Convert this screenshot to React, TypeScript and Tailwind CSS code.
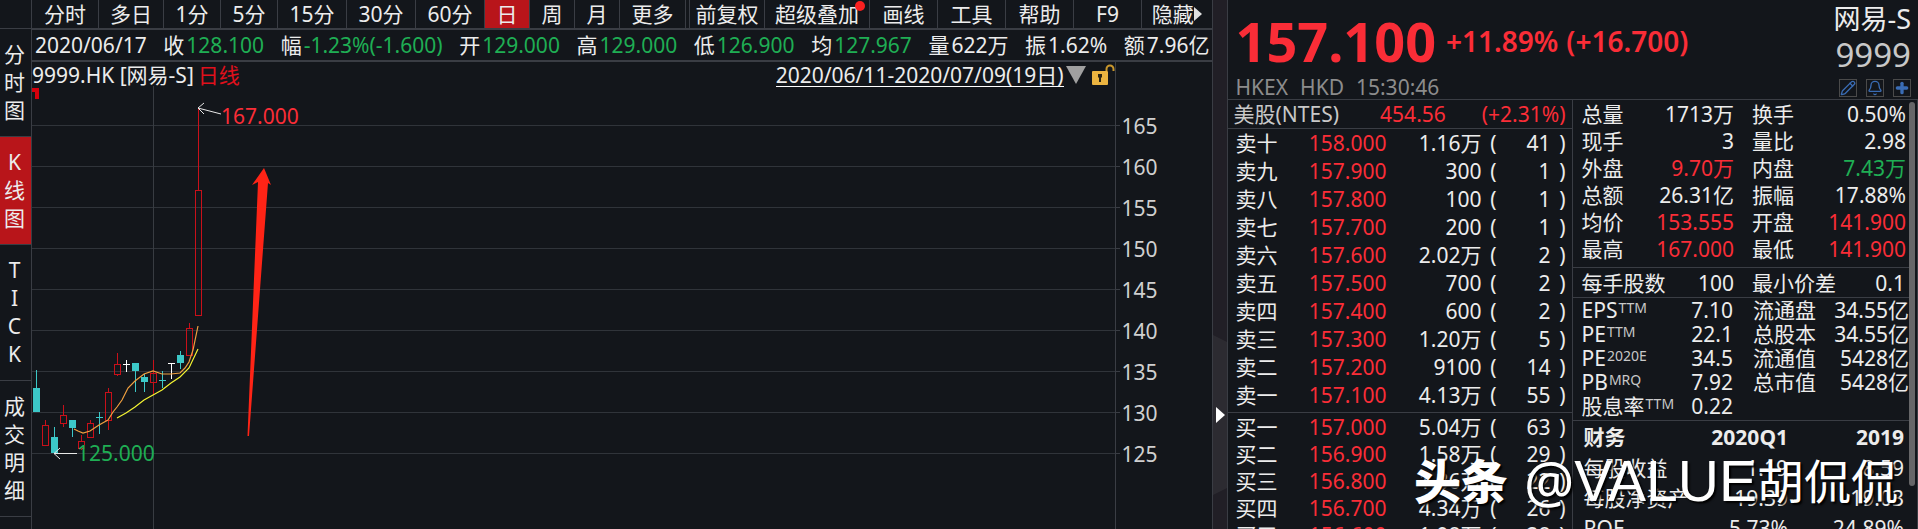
import React from "react";
import { Bell, Pencil, Plus } from "lucide-react";

const PERIODS = [
  { label: "分时", width: "w-[67px]" },
  { label: "多日", width: "w-[65px]" },
  { label: "1分", width: "w-[57px]" },
  { label: "5分", width: "w-[57px]" },
  { label: "15分", width: "w-[69px]" },
  { label: "30分", width: "w-[69px]" },
  { label: "60分", width: "w-[69px]" },
  { label: "日", width: "w-[45px]", active: true },
  { label: "周", width: "w-[45px]" },
  { label: "月", width: "w-[45px]" },
  { label: "更多", width: "w-[66px]" },
];

const TOOLS = [
  { label: "前复权", width: "w-[75px]" },
  { label: "超级叠加", width: "w-[105px]", dot: true },
  { label: "画线", width: "w-[68px]" },
  { label: "工具", width: "w-[68px]" },
  { label: "帮助", width: "w-[68px]" },
  { label: "F9", width: "w-[68px]" },
];

const SIDE_TABS = [
  { label: "分时图" },
  { label: "K线图", active: true },
  { label: "TICK" },
  { label: "成交明细" },
];

const DAY_INFO = [
  { label: "收", value: "128.100", green: true },
  { label: "幅", value: "-1.23%(-1.600)", green: true },
  { label: "开", value: "129.000", green: true },
  { label: "高", value: "129.000", green: true },
  { label: "低", value: "126.900", green: true },
  { label: "均", value: "127.967", green: true },
  { label: "量", value: "622万" },
  { label: "振", value: "1.62%" },
  { label: "额", value: "7.96亿" },
];

const PRICE_TICKS = [165, 160, 155, 150, 145, 140, 135, 130, 125];

type Candle = {
  high: number;
  low: number;
  top: number;
  bottom: number;
  kind: "up" | "down" | "flat";
};

const CANDLES: Candle[] = [
  { high: 135.1, low: 130, top: 132.9, bottom: 130, kind: "down" },
  { high: 129, low: 126, top: 128.4, bottom: 126, kind: "up" },
  { high: 128.2, low: 125, top: 127, bottom: 125, kind: "down" },
  { high: 130.8, low: 128.2, top: 129.6, bottom: 128.6, kind: "up" },
  { high: 129, low: 126.9, top: 129, bottom: 128.1, kind: "down" },
  { high: 127.2, low: 125.4, top: 126.5, bottom: 125.6, kind: "up" },
  { high: 129, low: 127, top: 128.7, bottom: 127, kind: "up" },
  { high: 130, low: 127.3, top: 129.4, bottom: 129.4, kind: "down" },
  { high: 132.9, low: 127.8, top: 132.5, bottom: 129, kind: "up" },
  { high: 137.2, low: 134.4, top: 135.9, bottom: 134.6, kind: "up" },
  { high: 136.4, low: 134.9, top: 135.9, bottom: 135.9, kind: "flat" },
  { high: 136, low: 132.4, top: 136, bottom: 135, kind: "down" },
  { high: 134.6, low: 132.4, top: 134.3, bottom: 133.6, kind: "down" },
  { high: 136.4, low: 132.1, top: 134.8, bottom: 133.6, kind: "up" },
  { high: 135, low: 132.9, top: 133.9, bottom: 133.9, kind: "down" },
  { high: 136, low: 134, top: 136, bottom: 136, kind: "flat" },
  { high: 137.4, low: 135.3, top: 137, bottom: 136, kind: "down" },
  { high: 140.9, low: 137, top: 140.3, bottom: 137, kind: "up" },
  { high: 167, low: 141.8, top: 157.1, bottom: 141.8, kind: "up" },
];

const ASKS = [
  ["卖十", "158.000", "1.16万", "41"],
  ["卖九", "157.900", "300", "1"],
  ["卖八", "157.800", "100", "1"],
  ["卖七", "157.700", "200", "1"],
  ["卖六", "157.600", "2.02万", "2"],
  ["卖五", "157.500", "700", "2"],
  ["卖四", "157.400", "600", "2"],
  ["卖三", "157.300", "1.20万", "5"],
  ["卖二", "157.200", "9100", "14"],
  ["卖一", "157.100", "4.13万", "55"],
];

const BIDS = [
  ["买一", "157.000", "5.04万", "63"],
  ["买二", "156.900", "1.58万", "29"],
  ["买三", "156.800", "1.36万", "22"],
  ["买四", "156.700", "4.34万", "26"],
  ["买五", "156.600", "1.98万", "28"],
];

const STATS = [
  ["总量", "1713万", "", "换手", "0.50%", ""],
  ["现手", "3", "", "量比", "2.98", ""],
  ["外盘", "9.70万", "text-[#fa2d37]", "内盘", "7.43万", "text-[#1fae54]"],
  ["总额", "26.31亿", "", "振幅", "17.88%", ""],
  ["均价", "153.555", "text-[#fa2d37]", "开盘", "141.900", "text-[#fa2d37]"],
  ["最高", "167.000", "text-[#fa2d37]", "最低", "141.900", "text-[#fa2d37]"],
];

const RATIOS = [
  ["EPS", "TTM", "7.10", "流通盘", "34.55亿"],
  ["PE", "TTM", "22.1", "总股本", "34.55亿"],
  ["PE", "2020E", "34.5", "流通值", "5428亿"],
  ["PB", "MRQ", "7.92", "总市值", "5428亿"],
  ["股息率", "TTM", "0.22", "", ""],
];

const FINANCE = [
  ["每股收益", "1.19", "8.59"],
  ["每股净资产", "19.39", "19.03"],
  ["ROE", "5.73%", "24.89%"],
];

const priceToY = (price: number) => Math.round(39 + (165 - price) * 8.2);

function CandleShape({ candle, index }: { candle: Candle; index: number }) {
  const x = 4 + index * 9;
  const high = priceToY(candle.high);
  const low = priceToY(candle.low);
  const top = priceToY(candle.top);
  const bottom = priceToY(candle.bottom);

  if (candle.kind === "up") {
    return (
      <g stroke="#c9101a" fill="none">
        <path d={`M${x + 0.5} ${high}V${top}M${x + 0.5} ${bottom}V${low}`} />
        <rect x={x - 2.5} y={top + 0.5} width={6} height={bottom - top} />
      </g>
    );
  }

  const color = candle.kind === "flat" ? "#ffffff" : "#3cc8c8";
  return (
    <g fill={color}>
      <rect x={x} y={high} width={1} height={low - high} />
      <rect x={x - 3} y={top} width={7} height={Math.max(1, bottom - top)} />
    </g>
  );
}

function KLineChart() {
  return (
    <svg
      className="block w-full h-[443px]"
      shapeRendering="crispEdges"
      role="img"
      aria-label="日线"
    >
      {PRICE_TICKS.map((p) => (
        <rect
          key={p}
          x="0"
          y={priceToY(p)}
          width="100%"
          height="1"
          fill="#30343a"
        />
      ))}
      <rect x="121" y="0" width="1" height="443" fill="#383c42" />
      <path d="M0 2h7v11h-4v-7h-3z" fill="#d4000c" />

      {CANDLES.map((c, i) => (
        <CandleShape key={i} candle={c} index={i} />
      ))}

      {/* MA5 / MA10 */}
      <g fill="none" shapeRendering="auto" strokeWidth="1.2">
        <path
          stroke="#f0a040"
          d="M42 343L46 345L51 347L58 345L67 339L76 334L81 326L85 321L90 314L96 302L103 295L112 288L121 285L130 288L139 288L148 287L153 282L157 276L161 264L166 240"
        />
        <path
          stroke="#f4f432"
          d="M85 332L94 327L103 321L112 314L121 309L130 304L139 297L148 291L157 282L166 263"
        />
      </g>

      <g fill="none" stroke="#e8e8e8" shapeRendering="auto">
        <path d="M189 28L166 22M172 17L166 22L172 28" />
        <path d="M45 367.500H22M28 362L22 367.500L28 373" />
      </g>
      <path
        d="M232 82L239 99L236 97L217 350H215.500L226 96L220 99Z"
        fill="#ff2416"
        shapeRendering="auto"
      />
      <text x="189" y="38" fontSize="21" fill="#fa2d37">
        167.000
      </text>
      <text x="45" y="375" fontSize="21" fill="#1fae54">
        125.000
      </text>
    </svg>
  );
}

function Toolbar() {
  return (
    <nav className="flex h-7 shrink-0">
      {PERIODS.map((p) => (
        <button
          key={p.label}
          className={`${p.width} h-full border-r border-[#3a3d44] flex items-center justify-center ${
            p.active ? "bg-[#b8151a]" : ""
          }`}
        >
          {p.label}
        </button>
      ))}
      <div className="w-1 border-r border-[#3a3d44]" />
      {TOOLS.map((t) => (
        <button
          key={t.label}
          className={`${t.width} relative h-full border-r border-[#3a3d44] flex items-center justify-center`}
        >
          {t.label}
          {t.dot && (
            <span className="absolute right-1 top-px w-2.5 h-2.5 rounded-full bg-[#fa2020]" />
          )}
        </button>
      ))}
      <button className="flex-1 flex items-center justify-center">
        隐藏
        <svg width="8" height="14" viewBox="0 0 8 14">
          <path d="M0 0L8 7L0 14Z" fill="#e0e0e0" />
        </svg>
      </button>
    </nav>
  );
}

function SideTabs() {
  return (
    <aside className="w-8 shrink-0 border-r border-[#3a3d44] flex flex-col pt-7">
      {SIDE_TABS.map((tab) => (
        <button
          key={tab.label}
          className={`flex flex-col items-center pt-[11px] pb-3 border-t border-[#3a3d44] pr-0.5 ${
            tab.active ? "bg-[#b8151a]" : ""
          }`}
        >
          {tab.label.split("").map((ch, i) => (
            <span key={i} className="leading-7">
              {ch}
            </span>
          ))}
        </button>
      ))}
      <div className="border-t border-[#3a3d44]" />
    </aside>
  );
}

function ChartPanel() {
  return (
    <section className="flex-1 min-w-0 flex flex-col">
      <Toolbar />
      <div className="flex items-center justify-between h-[34px] shrink-0 border-y-2 border-[#3a3d44] pl-[3px] pr-0.5 whitespace-nowrap">
        <span>2020/06/17</span>
        {DAY_INFO.map((d) => (
          <span key={d.label} className="flex gap-0.5">
            {d.label}
            <span className={d.green ? "text-[#1fae54]" : ""}>{d.value}</span>
          </span>
        ))}
      </div>
      <div className="flex flex-1">
        <div className="flex-1 min-w-0 border-r border-[#3a3d44]">
          <div className="flex items-center h-6 pt-0.5 whitespace-nowrap">
            <span>9999.HK [网易-S]</span>
            <span className="ml-1 text-[#e0101c]">日线</span>
            <button className="ml-auto border-b border-white leading-[22px]">
              2020/06/11-2020/07/09(19日)
            </button>
            <svg className="ml-0.5" width="20" height="18" viewBox="0 0 20 18">
              <path d="M0 0H20L10 18Z" fill="#a0a0a0" />
            </svg>
            <svg className="ml-1.5" width="23" height="22" viewBox="0 0 23 22">
              <rect y="7" width="16" height="14" rx="1" fill="#ecb440" />
              <path
                d="M14.500 7V5a3.500 3.500 0 0 1 7 0V7"
                fill="none"
                stroke="#c8962c"
                strokeWidth="2"
              />
              <path d="M6 10h4v3l-1 1v4h-2v-4l-1-1z" fill="#2c2412" />
            </svg>
          </div>
          <KLineChart />
        </div>
        <div className="w-24 pt-[43px] text-[#d0d0d0]">
          {PRICE_TICKS.map((p) => (
            <div key={p} className="flex items-center h-[41px]">
              <span className="w-1 h-px bg-[#3a3d44] mr-0.5" />
              {p}
            </div>
          ))}
        </div>
      </div>
    </section>
  );
}

function QuoteHeader() {
  return (
    <header className="flex justify-between h-[100px] border-b border-[#3a3d44] pl-2 pr-[7px]">
      <div className="flex flex-col">
        <div className="flex items-center h-[72px] pt-3 text-[#fa2d37]">
          <span className="text-[54px] leading-none font-bold">157.100</span>
          <span className="ml-2.5 text-[28px] font-semibold">+11.89%</span>
          <span className="ml-2 text-[28px] font-semibold">(+16.700)</span>
        </div>
        <div className="flex gap-3 mt-1.5 text-[#8c8c8c]">
          <span>HKEX</span>
          <span>HKD</span>
          <span>15:30:46</span>
        </div>
      </div>
      <div className="flex flex-col items-end">
        <span className="text-[27px] leading-[38px]">网易-S</span>
        <span className="text-[33px] leading-[34px] text-[#c8c8c8]">9999</span>
        <div className="flex gap-[9px] mt-[7px] text-[#3a6cb4]">
          {[Pencil, Bell, Plus].map((Icon, i) => (
            <button
              key={i}
              aria-label={["编辑", "提醒", "添加"][i]}
              className="flex items-center justify-center w-[18px] h-[18px] border border-[#4a4a4a]"
            >
              <Icon size={16} strokeWidth={i === 2 ? 5 : 2} />
            </button>
          ))}
        </div>
      </div>
    </header>
  );
}

function BookTable({ rows, rowClass }: { rows: string[][]; rowClass: string }) {
  return (
    <table className="w-full">
      <tbody>
        {rows.map(([name, price, volume, count]) => (
          <tr key={name} className={rowClass}>
            <td className="pl-2">{name}</td>
            <td className="w-[90px] text-right text-[#fa2d37]">{price}</td>
            <td className="w-[95px] text-right">{volume}</td>
            <td className="w-[15px] text-right">(</td>
            <td className="w-[54px] text-right">{count}</td>
            <td className="w-[21px] pr-1.5 text-right">)</td>
          </tr>
        ))}
      </tbody>
    </table>
  );
}

function OrderBook() {
  return (
    <div className="w-[345px] shrink-0 border-r border-[#3a3d44] whitespace-nowrap">
      <div className="flex items-center h-[29px] border-b border-[#3a3d44] pl-1.5 pr-1.5 text-[#c8c8c8]">
        <span>美股(NTES)</span>
        <span className="ml-auto text-[#fa2d37]">454.56</span>
        <span className="ml-9 text-[#fa2d37]">(+2.31%)</span>
      </div>
      <BookTable rows={ASKS} rowClass="h-7" />
      <div className="mt-[3px] border-t border-[#3a3d44]">
        <BookTable rows={BIDS} rowClass="h-[27px]" />
      </div>
    </div>
  );
}

function Fundamentals() {
  return (
    <div className="flex-1 min-w-0 flex border-r border-[#3a3d44] whitespace-nowrap">
      <div className="flex-1 min-w-0">
        <table className="w-full">
          <tbody>
            {STATS.map(([l1, v1, c1, l2, v2, c2]) => (
              <tr key={l1} className="h-[27px]">
                <td className="pl-[9px]">{l1}</td>
                <td className={`text-right ${c1}`}>{v1}</td>
                <td className="w-[94px] pl-[18px]">{l2}</td>
                <td className={`w-[81px] pr-[3px] text-right ${c2}`}>{v2}</td>
              </tr>
            ))}
          </tbody>
        </table>
        <div className="mt-[5px] flex items-center h-[31px] border-y border-[#3a3d44] pl-[9px] pr-1">
          <span>每手股数</span>
          <span className="ml-auto">100</span>
          <span className="pl-[18px]">最小价差</span>
          <span className="w-[69px] text-right">0.1</span>
        </div>
        <table className="w-full">
          <tbody>
            {RATIOS.map(([name, note, value, l2, v2]) => (
              <tr key={name + note} className="h-6">
                <td className="pl-[9px]">
                  <div className="flex items-start gap-px">
                    {name}
                    <span className="text-sm text-[#c8c8c8]">{note}</span>
                  </div>
                </td>
                <td className="text-right">{value}</td>
                <td className="w-[98px] pl-5">{l2}</td>
                <td className="w-[78px] text-right">{v2}</td>
              </tr>
            ))}
          </tbody>
        </table>
        <table className="w-full mt-0.5 border-t border-[#3a3d44]">
          <thead>
            <tr className="h-8 font-bold">
              <th className="pl-[11px] text-left">财务</th>
              <th className="text-right">2020Q1</th>
              <th className="w-[121px] pr-[5px] text-right">2019</th>
            </tr>
          </thead>
          <tbody>
            {FINANCE.map(([name, q1, year]) => (
              <tr key={name} className="h-[30px]">
                <td className="pl-[11px]">{name}</td>
                <td className="text-right">{q1}</td>
                <td className="pr-[5px] text-right">{year}</td>
              </tr>
            ))}
          </tbody>
        </table>
      </div>
      <div className="w-2 pt-0.5">
        <div className="w-1.5 h-[384px] rounded-full bg-[#666668]" />
      </div>
    </div>
  );
}

export default function App() {
  return (
    <main className="relative flex h-screen overflow-hidden bg-[#13161b] text-[21px] leading-6 text-[#ececec] font-['Noto_Sans','Noto_Sans_CJK_SC',sans-serif]">
      <SideTabs />
      <ChartPanel />
      <div className="relative w-4 shrink-0 border-x border-[#3a3d44] bg-[#211f26]">
        <button
          aria-label="展开"
          className="absolute left-0 top-[335px] w-full h-40"
        >
          <svg width="14" height="160" viewBox="0 0 14 160">
            <path d="M0 0L14 7V153L0 160Z" fill="#2c2b31" />
            <path d="M3 72L12 80L3 88Z" fill="#ffffff" />
          </svg>
        </button>
      </div>
      <section className="w-[36%] shrink-0 flex flex-col">
        <QuoteHeader />
        <div className="flex flex-1">
          <OrderBook />
          <Fundamentals />
        </div>
      </section>

      <div className="absolute right-5 bottom-4 flex items-center whitespace-nowrap text-[47px] leading-[64px] text-white [text-shadow:2px_2px_2px_#000]">
        <span className="font-black">头条</span>
        <span className="ml-4 text-[56px]">@</span>
        <span className="text-[57px] font-['Liberation_Sans']">VALUE</span>
        <span>胡侃侃</span>
      </div>
    </main>
  );
}
